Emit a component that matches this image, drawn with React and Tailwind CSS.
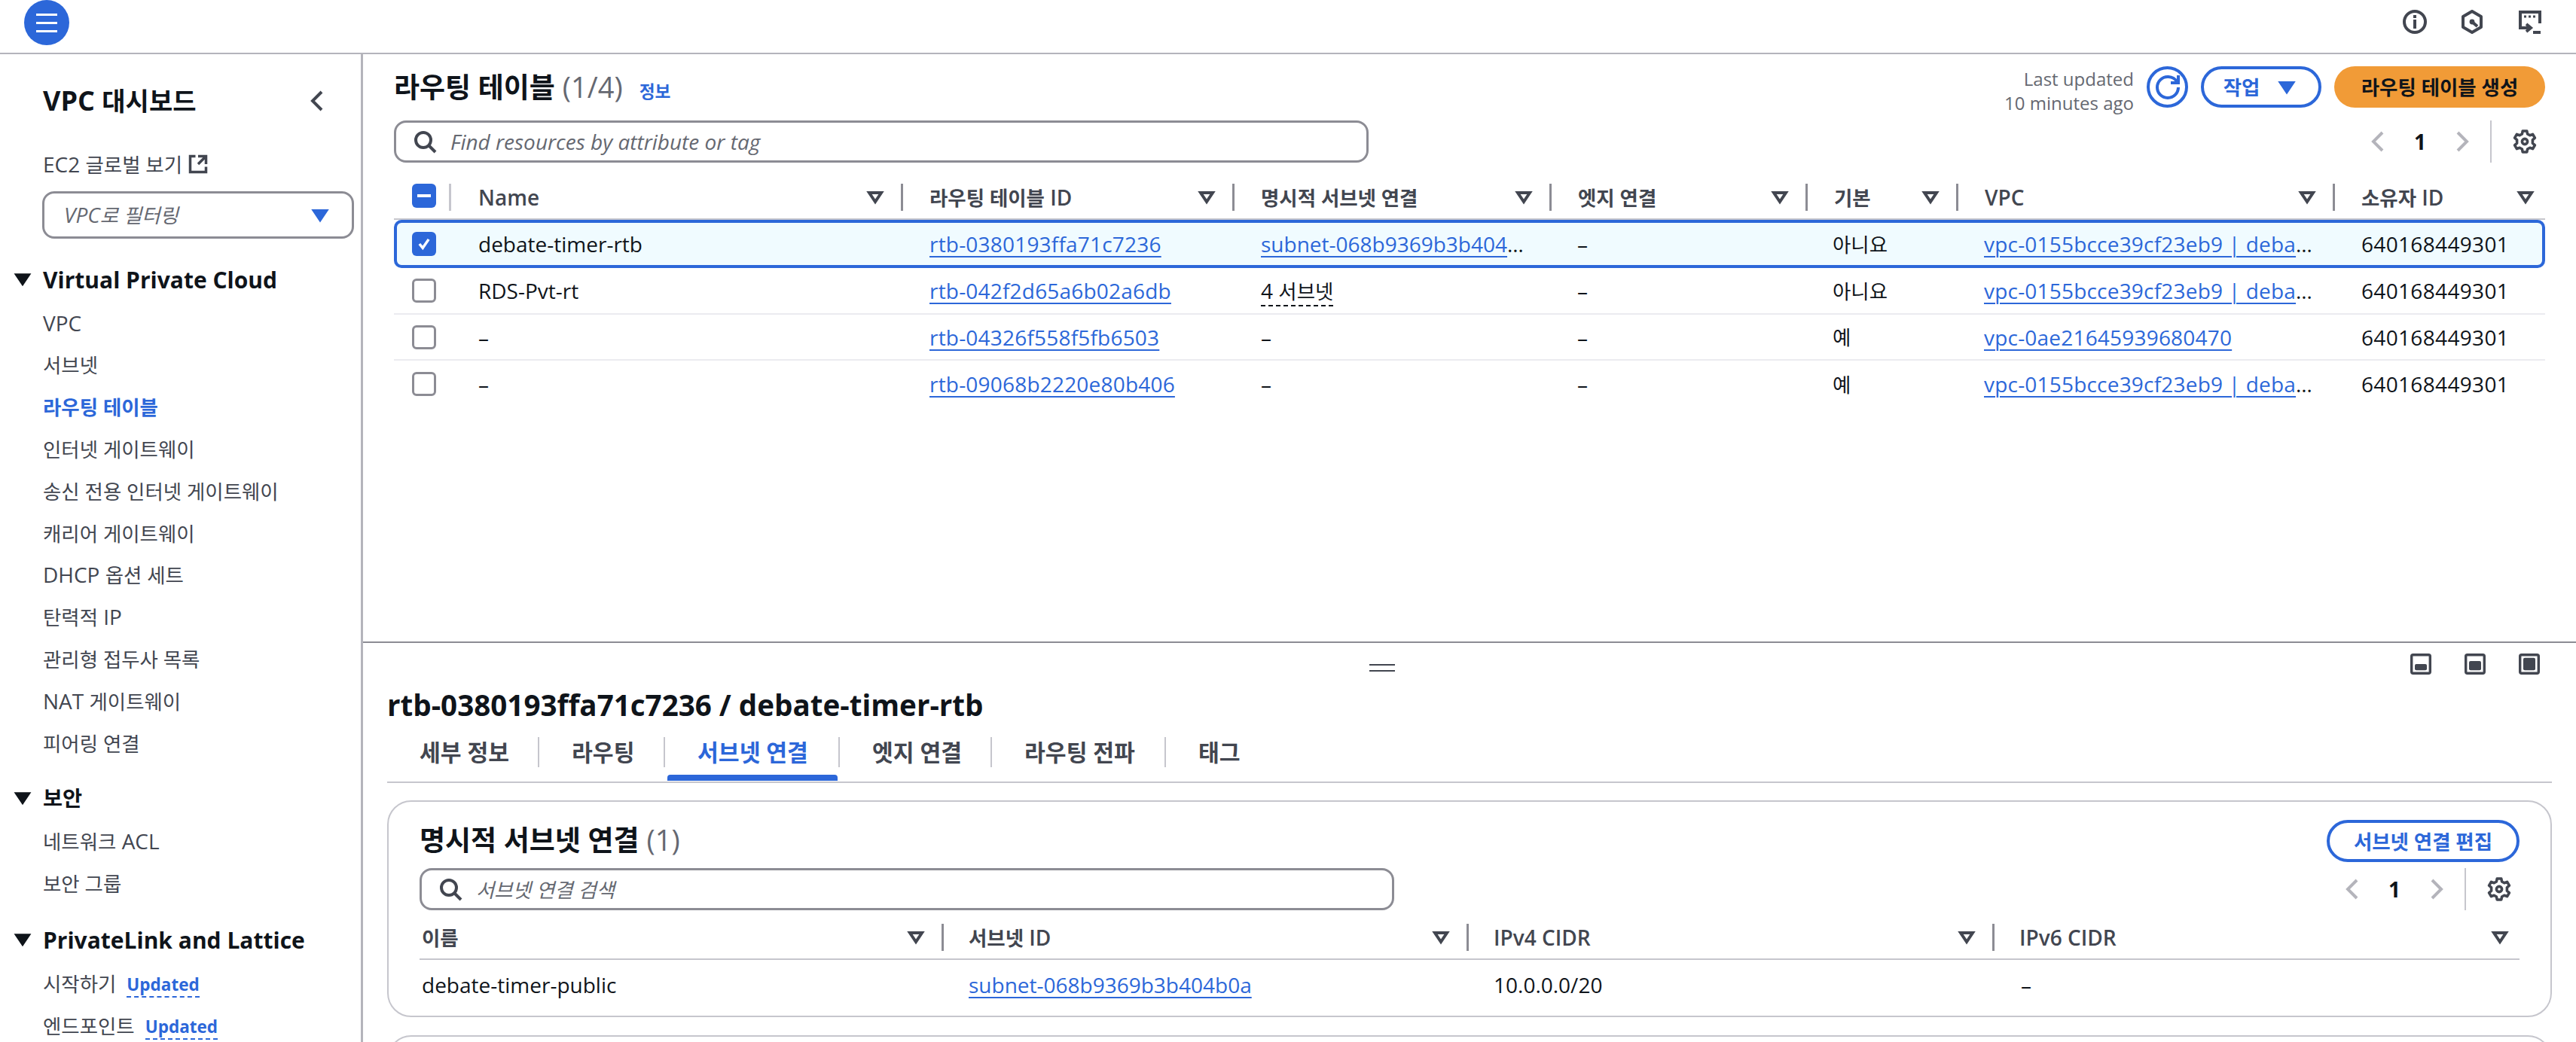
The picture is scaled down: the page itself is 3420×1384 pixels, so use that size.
import React from 'react';

const FONT = "font-['Open_Sans','Noto_Sans_CJK_KR',sans-serif]";

const T = ({ children }) =>
  typeof children === 'string'
    ? children.split(/([가-힣][가-힣 ]*[가-힣]|[가-힣])/).map((p, i) =>
        i % 2 ? <span key={i} className="text-[0.945em]">{p}</span> : p
      )
    : children;

const S = ({ className = '', children, vb = 16, fill = 'none', sw = 2 }) => (
  <svg viewBox={`0 0 ${vb} ${vb}`} className={`shrink-0 ${className}`} fill={fill} stroke="currentColor" strokeWidth={sw}>
    {children}
  </svg>
);

const Sort = () => (
  <S className="w-8 h-8 text-[#424650]"><path d="M4 5h8l-4 6-4-6z" /></S>
);
const Filled = ({ className }) => (
  <S className={className} fill="currentColor"><path d="M4 5h8l-4 6-4-6z" /></S>
);
const SearchI = ({ className = '' }) => (
  <S className={`w-8 h-8 text-[#424650] ${className}`}>
    <path d="M7 2a5 5 0 1 0 0 10A5 5 0 0 0 7 2z" />
    <path d="m15 15-4.5-4.5" />
  </S>
);
const Gear = () => (
  <S className="w-8 h-8 text-[#424650]" sw={1.8}>
    <path d="M6.6 1h2.8l.4 2 1.6.9 1.9-.7 1.4 2.4-1.5 1.3v2.2l1.5 1.3-1.4 2.4-1.9-.7-1.6.9-.4 2H6.6l-.4-2-1.6-.9-1.9.7L1.300 10.400l1.500-1.300V6.900L1.300 5.600l1.400-2.400 1.900.7 1.600-.9z" strokeLinejoin="round" />
    <circle cx="8" cy="8" r="1.8" />
  </S>
);
const Pager = ({ mr }) => (
  <div className={`flex items-center h-[56px] ${mr}`}>
    <S className="w-8 h-8 text-[#b4b4bb]"><path d="M11 2 5 8l6 6" /></S>
    <span className="w-[80px] text-center text-[28px] font-bold text-[#0f141a]">1</span>
    <S className="w-8 h-8 text-[#b4b4bb]"><path d="m5 2 6 6-6 6" /></S>
    <div className="w-0.5 h-[56px] bg-[#c6c6cd] ml-[21px] mr-[28px]" />
    <Gear />
  </div>
);
const Search = ({ text }) => (
  <div className="w-[1294px] h-[56px] flex items-center border-[3px] border-[#8c8c94] rounded-[16px]">
    <SearchI className="ml-[22px] mr-[18px]" />
    <span className="italic text-[28px] text-[#656871]"><T>{text}</T></span>
  </div>
);
const A = ({ children, className = '' }) => (
  <span className={`text-[#2c67d9] underline decoration-2 underline-offset-[5px] ${className}`}>{children}</span>
);
const Head = ({ children, divider = true, className = 'pl-[35px]' }) => (
  <div className={`flex items-center justify-between h-[36px] ${className}`}>
    <span className="text-[28px] font-semibold text-[#424650] truncate"><T>{children}</T></span>
    <div className="flex items-center">
      <Sort />
      {divider ? <div className="w-[3px] h-[36px] bg-[#8c8c94] ml-[18px]" /> : <div className="w-[10px]" />}
    </div>
  </div>
);

const Item = ({ children, active, badge }) => (
  <div className={`h-[55.8px] flex items-center pl-[57px] text-[28px] ${active ? 'font-bold text-[#2c67d9]' : 'text-[#424650]'}`}>
    <span><T>{children}</T></span>
    {badge && (
      <span className="ml-[14px] mt-[6px] text-[22.5px] font-bold text-[#2c67d9] border-b-2 border-dashed border-[#2c67d9] leading-[30px]">Updated</span>
    )}
  </div>
);
const Section = ({ children, className = '' }) => (
  <div className={`h-[60px] flex items-center pl-[20px] ${className}`}>
    <Filled className="w-[24px] h-[24px] text-[#0f141a] -ml-[2px] mr-[15px] scale-[1.3]" />
    <span className="text-[30px] font-bold text-[#0f141a]"><T>{children}</T></span>
  </div>
);

const Sidebar = () => (
  <aside className="w-[482px] shrink-0 border-r-[3px] border-[#b4b4bb] overflow-hidden">
    <div className="h-[36px] mt-[44px] flex items-center justify-between pl-[57px] pr-[42px]">
      <span className="text-[36px] font-bold text-[#0f141a]"><T>VPC 대시보드</T></span>
      <S className="w-8 h-8 text-[#424650]"><path d="M11 2 5 8l6 6" /></S>
    </div>
    <div className="h-[40px] mt-[46px] flex items-center pl-[57px] gap-[7px] text-[28px] text-[#424650]">
      <span><T>EC2 글로벌 보기</T></span>
      <S className="w-[28px] h-[28px] text-[#424650]">
        <path d="M14 8.01v-6H8M14.02 2 8 8.01" />
        <path d="M6 2.01H2v12h12v-3.99" />
      </S>
    </div>
    <div className="mt-[16px] ml-[56px] w-[414px] h-[63px] border-[3px] border-[#8c8c94] rounded-[16px] flex items-center justify-between pl-[26px] pr-[26px]">
      <span className="italic text-[28px] text-[#656871]"><T>VPC로 필터링</T></span>
      <Filled className="w-[32px] h-[32px] text-[#2c67d9]" />
    </div>
    <Section className="mt-[24px]">Virtual Private Cloud</Section>
    <div>
      <Item>VPC</Item>
      <Item>서브넷</Item>
      <Item active>라우팅 테이블</Item>
      <Item>인터넷 게이트웨이</Item>
      <Item>송신 전용 인터넷 게이트웨이</Item>
      <Item>캐리어 게이트웨이</Item>
      <Item>DHCP 옵션 세트</Item>
      <Item>탄력적 IP</Item>
      <Item>관리형 접두사 목록</Item>
      <Item>NAT 게이트웨이</Item>
      <Item>피어링 연결</Item>
    </div>
    <Section className="mt-[15px]">보안</Section>
    <Item>네트워크 ACL</Item>
    <Item>보안 그룹</Item>
    <Section className="mt-[17px]">PrivateLink and Lattice</Section>
    <Item badge>시작하기</Item>
    <Item badge>엔드포인트</Item>
  </aside>
);

const Check = ({ state }) => {
  if (state === 'on')
    return (
      <div className="w-[32px] h-[32px] rounded-[6px] bg-[#2c67d9] flex items-center justify-center">
        <svg viewBox="0 0 16 16" className="w-[28px] h-[28px]" fill="none" stroke="white" strokeWidth="2"><path d="m4.5 8 2.500 3 4.500-6.500" /></svg>
      </div>
    );
  if (state === 'mixed')
    return (
      <div className="w-[32px] h-[32px] rounded-[6px] bg-[#2c67d9] flex items-center justify-center">
        <div className="w-[18px] h-[4px] bg-white" />
      </div>
    );
  return <div className="w-[32px] h-[32px] rounded-[6px] border-[3px] border-[#8c8c94] bg-white" />;
};

const COLS = 'grid grid-cols-[76px_600px_440px_421px_340px_200px_500px_1fr]';

const Row = ({ checked, name, id, subnet, def, vpc, className }) => (
  <div className={`${COLS} items-center text-[28px] text-[#0f141a] ${className}`}>
    <div className="pl-[24px]"><Check state={checked ? 'on' : 'off'} /></div>
    <div className="pl-[36px]">{name}</div>
    <div className="pl-[35px]"><A className="tracking-[0.2px]">{id}</A></div>
    <div className="pl-[35px] pr-[28px] truncate">{subnet}</div>
    <div className="pl-[34px]">–</div>
    <div className="pl-[33px]"><T>{def}</T></div>
    <div className="pl-[34px] pr-[28px] truncate"><A className="tracking-[0.2px]">{vpc}</A></div>
    <div className="pl-[35px] tracking-[0.33px]">640168449301</div>
  </div>
);

const LONGVPC = 'vpc-0155bcce39cf23eb9 | debate-timer-vpc';

const TopPanel = () => (
  <section className="h-[780px] shrink-0 pl-[41px] pr-[41px]">
    <div className="flex items-start justify-between h-[88px] pt-[16px]">
      <div className="flex items-baseline h-[55px] -mt-[1px]">
        <span className="text-[37px] font-bold text-[#0f141a]">라우팅 테이블</span>
        <span className="text-[38px] text-[#656871] ml-[10px]">(1/4)</span>
        <span className="text-[24px] font-bold text-[#2c67d9] ml-[22px]"><T>정보</T></span>
      </div>
      <div className="flex items-center h-[55px]">
        <div className="text-right text-[24px] leading-[32px] text-[#656871] mr-[17px] mt-[10px]">
          <div>Last updated</div>
          <div>10 minutes ago</div>
        </div>
        <div className="w-[55px] h-[55px] rounded-full border-[4px] border-[#2c67d9] flex items-center justify-center text-[#2c67d9] mr-[17px]">
          <S className="w-8 h-8">
            <path d="M10 5h5V0" />
            <path d="M15 8a6.957 6.957 0 0 1-7 7 6.957 6.957 0 0 1-7-7 6.957 6.957 0 0 1 7-7 6.87 6.87 0 0 1 6.5 4" />
          </S>
        </div>
        <div className="w-[160px] h-[55px] rounded-full border-[4px] border-[#2c67d9] flex items-center justify-center gap-[20px] text-[28px] font-bold text-[#2c67d9] mr-[17px]">
          <span><T>작업</T></span>
          <Filled className="w-[32px] h-[32px] text-[#2c67d9]" />
        </div>
        <div className="w-[280px] h-[55px] rounded-full bg-[#f19b37] flex items-center justify-center text-[28px] font-bold text-[#0f141a]">
          <span><T>라우팅 테이블 생성</T></span>
        </div>
      </div>
    </div>
    <div className="flex items-center justify-between h-[56px]">
      <Search text="Find resources by attribute or tag" />
      <Pager mr="mr-[11px]" />
    </div>
    <div className={`${COLS} mt-[28px] pb-[10px] border-b-2 border-[#c6c6cd]`}>
      <div className="flex items-start h-[36px] justify-between pl-[24px]">
        <Check state="mixed" />
        <div className="w-[3px] h-[36px] bg-[#c6c6cd]" />
      </div>
      <Head className="pl-[36px]">Name</Head>
      <Head>라우팅 테이블 ID</Head>
      <Head>명시적 서브넷 연결</Head>
      <Head>엣지 연결</Head>
      <Head>기본</Head>
      <Head>VPC</Head>
      <Head divider={false}>소유자 ID</Head>
    </div>
    <Row
      checked
      name="debate-timer-rtb"
      id="rtb-0380193ffa71c7236"
      subnet={<A>subnet-068b9369b3b404b0a</A>}
      def="아니요"
      vpc={LONGVPC}
      className="h-[64px] rounded-[10px] bg-[#f0fbff] shadow-[inset_0_0_0_4px_#2c67d9]"
    />
    <Row
      name="RDS-Pvt-rt"
      id="rtb-042f2d65a6b02a6db"
      subnet={<span className="border-b-2 border-dashed border-[#0f141a]"><T>4 서브넷</T></span>}
      def="아니요"
      vpc={LONGVPC}
      className="h-[62px] border-b-2 border-[#ebebf0]"
    />
    <Row
      name="–"
      id="rtb-04326f558f5fb6503"
      subnet="–"
      def="예"
      vpc="vpc-0ae21645939680470"
      className="h-[61px] border-b-2 border-[#ebebf0]"
    />
    <Row
      name="–"
      id="rtb-09068b2220e80b406"
      subnet="–"
      def="예"
      vpc={LONGVPC}
      className="h-[62px]"
    />
  </section>
);

const Tab = ({ children, active, last, width }) => (
  <div className={`relative h-[40px] flex items-center pl-[43px] ${width} ${last ? '' : 'border-r-2 border-[#c6c6cd]'} text-[32px] font-semibold ${active ? 'text-[#2c67d9]' : 'text-[#424650]'}`}>
    <span><T>{children}</T></span>
    {active && <div className="absolute left-[3px] right-[1px] top-[50px] h-[8px] rounded-t-[4px] bg-[#2c67d9]" />}
  </div>
);

const COLS2 = 'grid grid-cols-[696px_697px_698px_1fr]';

const Pane = ({ top }) => (
  <svg viewBox="0 0 28 28" className="w-[28px] h-[28px] text-[#424650] shrink-0">
    <rect x="1.700" y="1.700" width="24.600" height="24.600" rx="2" fill="none" stroke="currentColor" strokeWidth="3.400" />
    <rect x="6" y={top} width="16" height={22.3 - top} rx="2" fill="currentColor" />
  </svg>
);

const BottomPanel = () => (
  <section className="flex-1 border-t-2 border-[#8c8c94] pl-[32px] pr-[32px] overflow-hidden">
    <div className="flex items-center h-[66px]">
      <div className="flex-1" />
      <div className="w-[34px] h-[10px] border-y-2 border-[#424650] mr-[1348px]" />
      <div className="flex items-center gap-[44px] mr-[16px] -mt-[10px]">
        <Pane top={14} />
        <Pane top={10} />
        <Pane top={5.7} />
      </div>
    </div>
    <div className="h-[40px] -mt-[3px] flex items-center text-[38.6px] font-bold text-[#0f141a]">rtb-0380193ffa71c7236 / debate-timer-rtb</div>
    <div className="flex items-start h-[61px] mt-[22px] border-b-2 border-[#c6c6cd]">
      <Tab width="w-[202px]">세부 정보</Tab>
      <Tab width="w-[167px]">라우팅</Tab>
      <Tab width="w-[232px]" active>서브넷 연결</Tab>
      <Tab width="w-[202px]">엣지 연결</Tab>
      <Tab width="w-[231px]">라우팅 전파</Tab>
      <Tab width="w-[120px]" last>태그</Tab>
    </div>
    <div className="mt-[23px] h-[288px] border-2 border-[#c6c6cd] rounded-[32px] px-[41px]">
      <div className="flex items-start justify-between h-[88px] pt-[24px]">
        <div className="flex items-baseline h-[56px] -mt-[2px]">
          <span className="text-[37px] font-bold text-[#0f141a]">명시적 서브넷 연결</span>
          <span className="text-[38px] text-[#656871] ml-[10px]">(1)</span>
        </div>
        <div className="w-[256px] h-[56px] rounded-full border-[4px] border-[#2c67d9] flex items-center justify-center text-[28px] font-bold text-[#2c67d9]">
          <span><T>서브넷 연결 편집</T></span>
        </div>
      </div>
      <div className="flex items-center justify-between h-[56px]">
        <Search text="서브넷 연결 검색" />
        <Pager mr="mr-[11px]" />
      </div>
      <div className={`${COLS2} mt-[18px] pb-[10px] border-b-2 border-[#c6c6cd]`}>
        <Head className="pl-[3px]">이름</Head>
        <Head className="pl-[33px]">서브넷 ID</Head>
        <Head className="pl-[33px]">IPv4 CIDR</Head>
        <Head className="pl-[33px]" divider={false}>IPv6 CIDR</Head>
      </div>
      <div className={`${COLS2} h-[66px] items-center text-[28px] text-[#0f141a]`}>
        <div className="pl-[3px]">debate-timer-public</div>
        <div className="pl-[33px]"><A>subnet-068b9369b3b404b0a</A></div>
        <div className="pl-[33px]">10.0.0.0/20</div>
        <div className="pl-[35px]">–</div>
      </div>
    </div>
    <div className="mt-[24px] h-[100px] border-2 border-[#c6c6cd] rounded-[32px]" />
  </section>
);

export default function App() {
  return (
    <div className={`w-[3420px] h-[1384px] overflow-hidden bg-white flex flex-col ${FONT}`}>
      <header className="h-[72px] shrink-0 border-b-2 border-[#b4b4bb] flex items-start justify-between pl-[32px] pr-[46px]">
        <div className="w-[60px] h-[60px] rounded-full bg-[#2c67d9] flex flex-col items-center justify-center gap-[8px]">
          <div className="w-[28px] h-[3px] bg-white" />
          <div className="w-[28px] h-[3px] bg-white" />
          <div className="w-[28px] h-[3px] bg-white" />
        </div>
        <div className="flex items-center gap-[44px] h-[58px] text-[#424650]">
          <S className="w-8 h-8">
            <circle cx="8" cy="8" r="7" />
            <path d="M8 6.500V12.500M8 3.500V5.500" />
          </S>
          <S className="w-8 h-8">
            <path d="M8 1l6 3.5v7L8 15l-6-3.5v-7z" strokeLinejoin="round" />
            <circle cx="8" cy="8" r="1.200" fill="currentColor" strokeWidth="1" />
            <path d="m8 8 3.500 3" />
          </S>
          <S className="w-8 h-8">
            <path d="M5 12H2V1.500h13V9" />
            <path d="M4.500 4.500h1.500M7.500 4.500h1.500M10.500 4.500h1.500" strokeWidth="1.500" />
            <path d="M3 12h5.500M6 9.500l3 2.500-3 2.500" />
            <path d="M10.500 15h5" />
          </S>
        </div>
      </header>
      <div className="flex flex-1 min-h-0">
        <Sidebar />
        <main className="flex-1 min-w-0 flex flex-col">
          <TopPanel />
          <BottomPanel />
        </main>
      </div>
    </div>
  );
}
